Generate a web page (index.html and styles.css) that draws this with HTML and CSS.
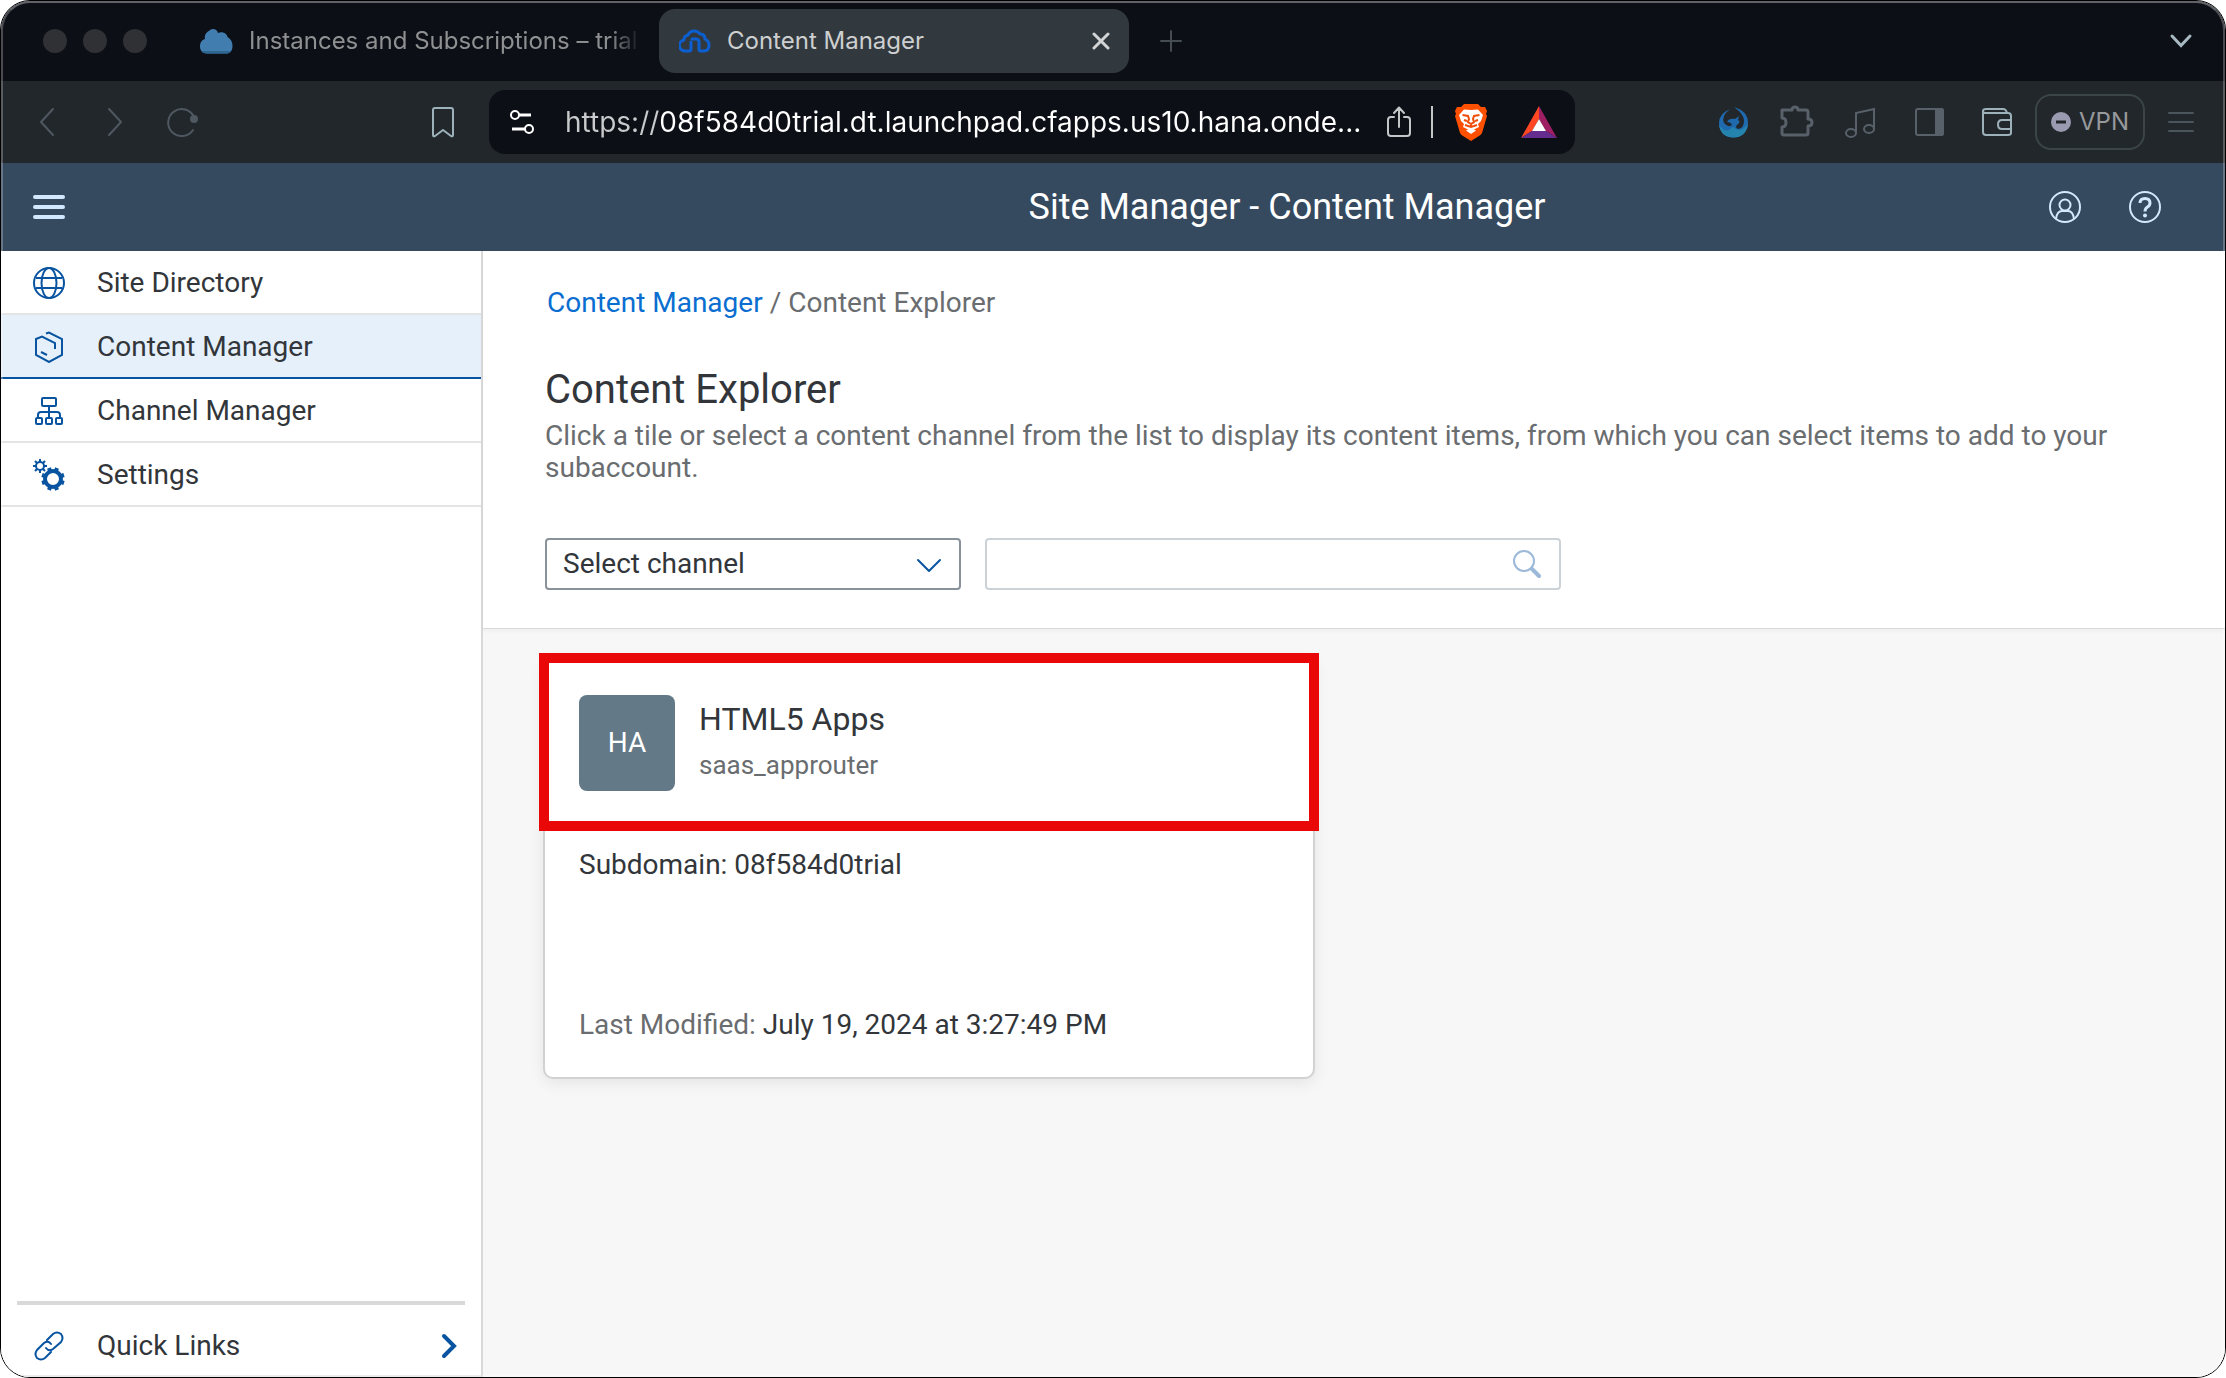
FILE: index.html
```html
<!DOCTYPE html>
<html lang="en">
<head>
<meta charset="utf-8">
<title>Content Manager</title>
<link rel="stylesheet" href="styles.css">
</head>
<body>
<div class="window">
  <div class="tabstrip">
    <div class="lights"><span class="light"></span><span class="light"></span><span class="light"></span></div>
    <div class="tab tab-idle">
      <svg width="34" height="26" viewBox="0 0 34 26"><path d="M8 25.500C3 25.500 1 22 1 18.500C1 15 2.500 12 6 11C5 7 8 3.500 10 3C12 0 18 0 19 5C24 3 28 6 28.500 9C32 11 33.500 14 33.500 18C33.500 23 31 25.500 27 25.500Z" fill="#427db0"/><path d="M2.500 23H32C31 25 29 25.500 27 25.500H8C5 25.500 3.500 24.500 2.500 23Z" fill="#2c6691"/></svg>
      <span class="tab-title">Instances and Subscriptions – trial</span>
    </div>
    <div class="tab tab-active">
      <svg width="32" height="24" viewBox="0 0 32 24" fill="none" stroke="#0c5fd3" stroke-width="3" stroke-linejoin="round" stroke-linecap="round"><path d="M12 13V20Q12 22 10 22H7A5.500 5.500 0 0 1 5 11Q5 7 9 6Q11 2 15 2Q19 2 21 5Q26 5 26 10Q30 12 30 16Q30 22 24.500 22H22Q20 22 20 20V13Q20 10 17 10H13"/></svg>
      <span class="tab-title">Content Manager</span>
      <button class="icon-button tab-close" aria-label="Close tab"><svg width="18" height="18" viewBox="0 0 18 18" stroke="#d2d4d5" stroke-width="3" stroke-linecap="round"><path d="M2 2L16 16M16 2L2 16"/></svg></button>
    </div>
    <button class="icon-button new-tab" aria-label="New tab"><svg width="24" height="24" viewBox="0 0 24 24" stroke="#454c54" stroke-width="2" stroke-linecap="round"><path d="M12 2V22M2 12H22"/></svg></button>
    <button class="icon-button tab-search" aria-label="Search tabs"><svg width="24" height="16" viewBox="0 0 24 16" fill="none" stroke="#a9b9c1" stroke-width="3" stroke-linecap="round"><path d="M3 3L12 12.500L21 3"/></svg></button>
  </div>

  <div class="toolbar">
    <div class="history">
      <button class="icon-button" aria-label="Back"><svg width="40" height="40" viewBox="0 0 40 40" fill="none" stroke="#4f5860" stroke-width="2" stroke-linecap="round" stroke-linejoin="round"><path d="M26 7L14 20L26 33"/></svg></button>
      <button class="icon-button" aria-label="Forward"><svg width="40" height="40" viewBox="0 0 40 40" fill="none" stroke="#4f5860" stroke-width="2" stroke-linecap="round" stroke-linejoin="round"><path d="M14 7L26 20L14 33"/></svg></button>
      <button class="icon-button" aria-label="Reload"><svg width="40" height="40" viewBox="0 0 40 40" fill="none" stroke="#4f5860" stroke-width="2" stroke-linecap="round"><path d="M30 28A13.500 13.500 0 1 1 31 15"/><circle cx="31" cy="17" r="3" fill="#4f5860"/></svg></button>
      <button class="icon-button bookmark" aria-label="Bookmark"><svg width="40" height="40" viewBox="0 0 40 40" fill="none" stroke="#9db1ba" stroke-width="2" stroke-linejoin="round"><path d="M10 8Q10 6 12 6H28Q30 6 30 8V33Q30 35 28 34L20 28L12 34Q10 35 10 33Z"/></svg></button>
    </div>
    <div class="address">
      <svg width="26" height="26" viewBox="0 0 26 26" fill="none" stroke="#fff" stroke-width="2"><circle cx="6" cy="6" r="4"/><circle cx="20" cy="20" r="4"/><path d="M10 6H22M3 20H16" stroke-width="3"/></svg>
      <input class="address-input" type="text" aria-label="Address" value="https://08f584d0trial.dt.launchpad.cfapps.us10.hana.onde...">
      <button class="icon-button" aria-label="Share"><svg width="26" height="34" viewBox="0 0 26 34" fill="none" stroke="#c4c6c8" stroke-width="2" stroke-linecap="round" stroke-linejoin="round"><path d="M8 12H5Q2 12 2 15V28Q2 31 5 31H21Q24 31 24 28V15Q24 12 21 12H18M13 22V3M8 8L13 2.500L18 8"/></svg></button>
      <span class="divider"></span>
      <button class="icon-button brave" aria-label="Brave Shields"><svg width="34" height="38" viewBox="0 0 34 38"><path d="M10 1H24L27 4L31 4L33 8L32 11L33 13L28 30Q27 32 25 33L17 38L9 33Q7 32 6 30L1 13L2 11L1 8L3 4L7 4Z" fill="#ff5000"/><path d="M17 7L24 6.500L29 12L27 18L24 21L25 24L17 28L9 24L10 21L7 18L5 12L10 6.500Z" fill="#fff"/><path d="M8.500 12L14 13L15 16L14 19L17 21L20 19L19 16L20 13L25.500 12M10 17L13 18M24 17L21 18M11 22L17 24L23 22M17 21V24" fill="none" stroke="#f04d08" stroke-width="2"/><path d="M17 25L22 27.500L17 31L12 27.500Z" fill="#fff"/></svg></button>
      <button class="icon-button rewards" aria-label="Brave Rewards"><svg width="36" height="32" viewBox="0 0 36 32"><path d="M18 0V13L11 25L0 32Z" fill="#ff4724"/><path d="M18 0L36 32L25 25L18 13Z" fill="#9e1f63"/><path d="M0 32L11 25H25L36 32Z" fill="#662d91"/><path d="M18 13L25 25H11Z" fill="#fff"/></svg></button>
    </div>
    <div class="extensions">
      <button class="icon-button" aria-label="Phoenix extension"><svg width="40" height="40" viewBox="0 0 40 40"><path d="M17 7Q6 12 6 21A14.500 14.500 0 0 0 35 21Q35 9 21 5Q31 12 31 19Q31 26 25 27Q21 25 25 22Q28 20 25 18L26 14L22 17Q16 16 14 20Q18 20 19 23Q15 26 11 21Q8 14 17 7Z" fill="#1f6aae"/><path d="M6 23Q13 33 20 25Q27 32 35 22Q33 35.500 20.500 35.500Q8 35.500 6 23Z" fill="#2584ae"/></svg></button>
      <button class="icon-button" aria-label="Extensions"><svg width="40" height="40" viewBox="0 0 40 40" fill="none" stroke="#586069" stroke-width="3" stroke-linejoin="round"><path d="M5 8H15Q15 5 18 5Q21 5 21 8H29Q31 8 31 10V17Q35 17 35 20.500Q35 24 31 24V31Q31 33 29 33H7Q5 33 5 31V25Q9 25 9 20.500Q9 16 5 16Z"/></svg></button>
      <button class="icon-button" aria-label="Media"><svg width="40" height="40" viewBox="0 0 40 40" fill="none" stroke="#586069" stroke-width="2"><ellipse cx="10" cy="31" rx="5" ry="4"/><ellipse cx="28" cy="27" rx="5" ry="4"/><path d="M15 31V11L33 7V27"/></svg></button>
    </div>
    <button class="icon-button" aria-label="Side panel"><svg width="40" height="40" viewBox="0 0 40 40" fill="none" stroke="#586069" stroke-width="2"><rect x="7" y="7" width="27" height="26" rx="2"/><path d="M27 7H32Q34 7 34 9V31Q34 33 32 33H27Z" fill="#586069"/></svg></button>
    <button class="icon-button" aria-label="Wallet"><svg width="40" height="40" viewBox="0 0 40 40" fill="none" stroke="#9db1ba" stroke-width="2" stroke-linejoin="round"><path d="M6 9V30Q6 33 9 33H31Q34 33 34 31V14Q34 11 31 11H8Q6 11 6 9Q6 7 9 7H26Q29 7 30 11M34 18H25Q21 18 21 22.500Q21 27 25 27H34"/></svg></button>
    <button class="vpn"><svg width="20" height="20" viewBox="0 0 20 20"><circle cx="10" cy="10" r="10" fill="#9a9bb0"/><path d="M5 10H15" stroke="#22272b" stroke-width="3"/></svg>VPN</button>
    <button class="icon-button menu" aria-label="Menu"><svg width="40" height="40" viewBox="0 0 40 40" stroke="#4a555c" stroke-width="2" stroke-linecap="round"><path d="M8 11H32M8 20H32M8 29H32"/></svg></button>
  </div>

  <header class="shell">
    <button class="icon-button" aria-label="Toggle navigation"><svg width="32" height="24" viewBox="0 0 32 24" stroke="#d1e8ff" stroke-width="4" stroke-linecap="round"><path d="M2 2H30M2 12H30M2 22H30"/></svg></button>
    <h1 class="shell-title">Site Manager - Content Manager</h1>
    <button class="icon-button" aria-label="User"><svg width="32" height="32" viewBox="0 0 32 32" fill="none" stroke="#d1e8ff" stroke-width="2"><circle cx="16" cy="16" r="15"/><circle cx="16" cy="14" r="5.500"/><path d="M7 28Q8 20 13 20H19Q24 20 25 28"/></svg></button>
    <button class="icon-button" aria-label="Help"><svg width="32" height="32" viewBox="0 0 32 32" fill="none" stroke="#d1e8ff" stroke-width="2"><circle cx="16" cy="16" r="15"/><path d="M11 12Q11 7.500 16 7.500Q21 7.500 21 12Q21 14.500 18.500 16Q16 17.500 16 20.500" stroke-width="3"/><circle cx="16" cy="24.500" r="2" fill="#d1e8ff" stroke="none"/></svg></button>
  </header>

  <div class="workspace">
    <aside class="sidebar">
      <nav class="nav">
        <a class="nav-item" href="#sites"><svg width="32" height="32" viewBox="0 0 32 32" fill="none" stroke="#0854a0" stroke-width="2"><circle cx="16" cy="16" r="15"/><ellipse cx="16" cy="16" rx="7.500" ry="15"/><path d="M3 11H29M3 21H29"/></svg>Site Directory</a>
        <a class="nav-item nav-selected" href="#content" aria-current="page"><svg width="32" height="32" viewBox="0 0 32 32" fill="none" stroke="#0854a0" stroke-width="2"><path d="M13 2.500L16 1.500L29 8V24L16 31L3 24V8L9 5.500L22 12V18M8 21L14 24"/></svg>Content Manager</a>
        <a class="nav-item" href="#channels"><svg width="32" height="32" viewBox="0 0 32 32" fill="none" stroke="#0854a0" stroke-width="2"><rect x="9" y="3" width="14" height="8" rx="1"/><rect x="3" y="23" width="6" height="6" rx="1"/><rect x="13" y="23" width="6" height="6" rx="1"/><rect x="23" y="23" width="6" height="6" rx="1"/><path d="M16 11V23M5 23V20Q5 17 8 17H24Q27 17 27 20V23"/></svg>Channel Manager</a>
        <a class="nav-item" href="#settings"><svg width="32" height="32" viewBox="0 0 32 32" fill="none" stroke="#0854a0"><circle cx="7" cy="7" r="4" stroke-width="2"/><path d="M7 0V3M7 11V14M0 7H3M11 7H14M2 2L4 4M10 10L12 12M12 2L10 4M2 12L4 10" stroke-width="2"/><circle cx="20" cy="20" r="8" stroke-width="4"/><path d="M17 12L16 9M23 12L24 9M28 17L31 16M28 23L31 24M23 28L24 31M17 28L16 31M12 23L9 24M12 17L9 16" stroke-width="4"/></svg>Settings</a>
      </nav>
      <div class="quick">
        <a class="quick-link" href="#quick"><svg width="32" height="32" viewBox="0 0 32 32" fill="none" stroke="#0854a0" stroke-width="2" stroke-linecap="round"><path d="M14 10L20 4Q24 1 28 4Q31 8 28 12L20 19Q16 22 13 18"/><path d="M18 22L12 28Q8 31 4 28Q1 24 4 20L11 13Q15 10 18 14"/></svg><span class="quick-label">Quick Links</span><svg width="16" height="28" viewBox="0 0 16 28" fill="none" stroke="#0854a0" stroke-width="4" stroke-linecap="round"><path d="M3 4L13 14L3 24"/></svg></a>
      </div>
    </aside>

    <main class="content">
      <section class="page-head">
        <nav class="breadcrumb"><a class="crumb-link" href="#content">Content Manager</a><span>/</span><span>Content Explorer</span></nav>
        <h2 class="page-title">Content Explorer</h2>
        <p class="page-text">Click a tile or select a content channel from the list to display its content items, from which you can select items to add to your subaccount.</p>
        <div class="filters">
          <div class="field channel">
            <select class="channel-select" aria-label="Channel"><option>Select channel</option></select>
            <svg class="field-icon" width="28" height="28" viewBox="0 0 28 28" fill="none" stroke="#0854a0" stroke-width="2" stroke-linecap="round" stroke-linejoin="round"><path d="M3 10L14 21L25 10"/></svg>
          </div>
          <div class="field search">
            <input class="search-input" type="search" aria-label="Search">
            <svg class="field-icon" width="28" height="28" viewBox="0 0 28 28" fill="none" stroke="#9cb9da" stroke-linecap="round"><circle cx="11" cy="11" r="10" stroke-width="2"/><path d="M19 19L26 26" stroke-width="4"/></svg>
          </div>
        </div>
      </section>
      <section class="tiles">
        <article class="card">
          <div class="card-head">
            <span class="avatar">HA</span>
            <div class="card-names">
              <h3 class="card-title">HTML5 Apps</h3>
              <p class="card-subtitle">saas_approuter</p>
            </div>
          </div>
          <div class="card-body">
            <p>Subdomain: 08f584d0trial</p>
            <p><span class="muted">Last Modified:</span> July 19, 2024 at 3:27:49 PM</p>
          </div>
        </article>
      </section>
    </main>
  </div>
</div>
</body>
</html>
```
FILE: styles.css
```css
* { box-sizing: border-box; }

body, h1, h2, h3, p { margin: 0; font-weight: 400; }

body {
  background: #fff;
  color: #32363a;
  font: 28px/36px Roboto, "Liberation Sans", sans-serif;
}

svg { display: block; flex: none; }
a { color: inherit; text-decoration: none; }

button {
  border: 0;
  padding: 0;
  background: none;
  flex: none;
}

/* Browser window */
.window {
  position: relative;
  display: flex;
  flex-direction: column;
  min-height: 100vh;
  border: 1px solid #000;
  border-radius: 30px;
  overflow: hidden;
}

/* Light rim drawn over the window's edge */
.window::after {
  content: "";
  position: absolute;
  inset: 0;
  border: 2px solid rgba(255, 255, 255, 0.25);
  border-top-color: rgba(255, 255, 255, 0.35);
  border-radius: 29px;
  pointer-events: none;
}

.tabstrip, .toolbar { font-family: Inter, "Liberation Sans", sans-serif; }

.tabstrip {
  display: flex;
  align-items: center;
  height: 80px;
  padding: 0 32px 0 42px;
  background: #0c0f16;
  font-size: 24px;
}

.lights { display: flex; gap: 16px; }
.light { width: 24px; height: 24px; border-radius: 50%; background: #2f3135; }

.tab { display: flex; align-items: center; gap: 16px; }

.tab-idle { width: 442px; margin: 0 18px 0 52px; color: #8f9091; }
.tab-idle .tab-title {
  flex: 1;
  white-space: nowrap;
  mask-image: linear-gradient(to right, #000 92%, transparent);
}

.tab-active {
  width: 470px;
  height: 64px;
  padding: 0 19px 0 20px;
  border-radius: 16px;
  background: #32393e;
  color: #cdcfd0;
}
.tab-close { margin-left: auto; }
.new-tab { margin-left: 30px; }
.tab-search { margin-left: auto; }

.toolbar {
  display: flex;
  align-items: center;
  height: 82px;
  padding: 0 24px 0 26px;
  background: #22272b;
}

.history { display: flex; gap: 28px; width: 436px; margin-right: 26px; }
.bookmark { margin-left: auto; }

.address {
  flex: 1;
  display: flex;
  align-items: center;
  min-width: 0;
  height: 64px;
  margin-right: 138px;
  padding: 0 18px 0 20px;
  border-radius: 16px;
  background: #0c0f16;
}
.address-input {
  flex: 1;
  min-width: 0;
  margin: 0 24px 0 30px;
  padding: 0;
  border: 0;
  outline: 0;
  background: linear-gradient(to right, #c9cacb 94px, #fff 94px);
  background-clip: text;
  color: transparent;
  font: 28px/36px Inter, "Liberation Sans", sans-serif;
}
.divider { width: 2px; height: 32px; margin: 0 21px 0 19px; background: #c4c6c8; }
.rewards { margin-left: 33px; }

.extensions { display: flex; gap: 24px; margin-right: 28px; }
.extensions ~ .icon-button { margin-right: 28px; }
.vpn {
  display: flex;
  align-items: center;
  gap: 8px;
  width: 110px;
  height: 56px;
  margin: 0 16px 0 -10px;
  padding-left: 14px;
  border: 2px solid #3a4449;
  border-radius: 16px;
  color: #97999b;
  font: 24px/32px Inter, "Liberation Sans", sans-serif;
}
.toolbar .menu { margin-right: 0; }

/* Application header */
.shell {
  display: flex;
  align-items: center;
  gap: 48px;
  height: 88px;
  padding: 0 64px 0 32px;
  background: #354a5f;
}
.shell-title {
  flex: 1;
  padding-left: 460px;
  color: #fff;
  font-size: 36px;
  line-height: 48px;
  text-align: center;
}

.workspace { flex: 1; display: flex; }

/* Side navigation */
.sidebar {
  display: flex;
  flex-direction: column;
  justify-content: space-between;
  flex: 0 0 482px;
  border-right: 2px solid #d9d9d9;
  background: #fff;
}
.nav-item {
  display: flex;
  align-items: center;
  gap: 32px;
  height: 64px;
  padding: 2px 0 0 32px;
  border-bottom: 2px solid #e4e4e4;
}
.nav-selected { border-color: #0854a0; background: #e5f0fa; }

.quick { padding: 0 16px; border-bottom: 2px solid #e4e4e4; }
.quick-link {
  display: flex;
  align-items: center;
  gap: 32px;
  height: 74px;
  padding: 12px 8px 0 16px;
  border-top: 4px solid #d9d9d9;
}
.quick-label { flex: 1; }

/* Main area */
.content { flex: 1; min-width: 0; background: #f7f7f7; }

.page-head {
  padding: 34px 62px 38px;
  border-bottom: 1px solid #d9d9d9;
  background: #fff;
  box-shadow: 0 2px 4px rgba(0, 0, 0, 0.04);
}
.breadcrumb { display: flex; gap: 7px; padding-left: 2px; color: #6a6d70; }
.crumb-link { color: #0a6ed1; }
.page-title { margin-top: 45px; font-size: 40px; line-height: 48px; }
.page-text { margin-top: 6px; color: #6a6d70; line-height: 32px; }

.filters { display: flex; gap: 24px; margin-top: 54px; }
.field { position: relative; height: 52px; }
.channel { width: 416px; }
.search { width: 576px; }

.channel-select, .search-input {
  width: 100%;
  height: 100%;
  padding: 0 60px 0 16px;
  border: 2px solid #89919a;
  border-radius: 4px;
  outline: 0;
  appearance: none;
  background: #fff;
  color: #32363a;
  font: inherit;
}
.search-input { border-color: #cdd2d7; }
.field-icon { position: absolute; top: 12px; right: 18px; pointer-events: none; }
.search .field-icon { right: 20px; }

.tiles { padding: 28px 60px; }

.card {
  max-width: 772px;
  border: 2px solid #d2d2d2;
  border-radius: 10px;
  background: #fff;
  box-shadow: 0 4px 16px rgba(0, 0, 0, 0.08);
}
.card-head {
  position: relative;
  display: flex;
  gap: 24px;
  padding: 36px 34px 34px;
}
/* Highlight frame around the card header */
.card-head::after {
  content: "";
  position: absolute;
  inset: -6px;
  border: 10px solid #ea0707;
}
.avatar {
  display: grid;
  place-items: center;
  width: 96px;
  height: 96px;
  border-radius: 8px;
  background: #647987;
  color: #fff;
}
.card-names { padding-top: 4px; }
.card-title { font-size: 32px; line-height: 40px; }
.card-subtitle { margin-top: 10px; color: #6a6d70; font-size: 26px; line-height: 32px; }

.card-body {
  display: flex;
  flex-direction: column;
  gap: 124px;
  padding: 22px 34px 34px;
}
.muted { color: #6a6d70; }
```
